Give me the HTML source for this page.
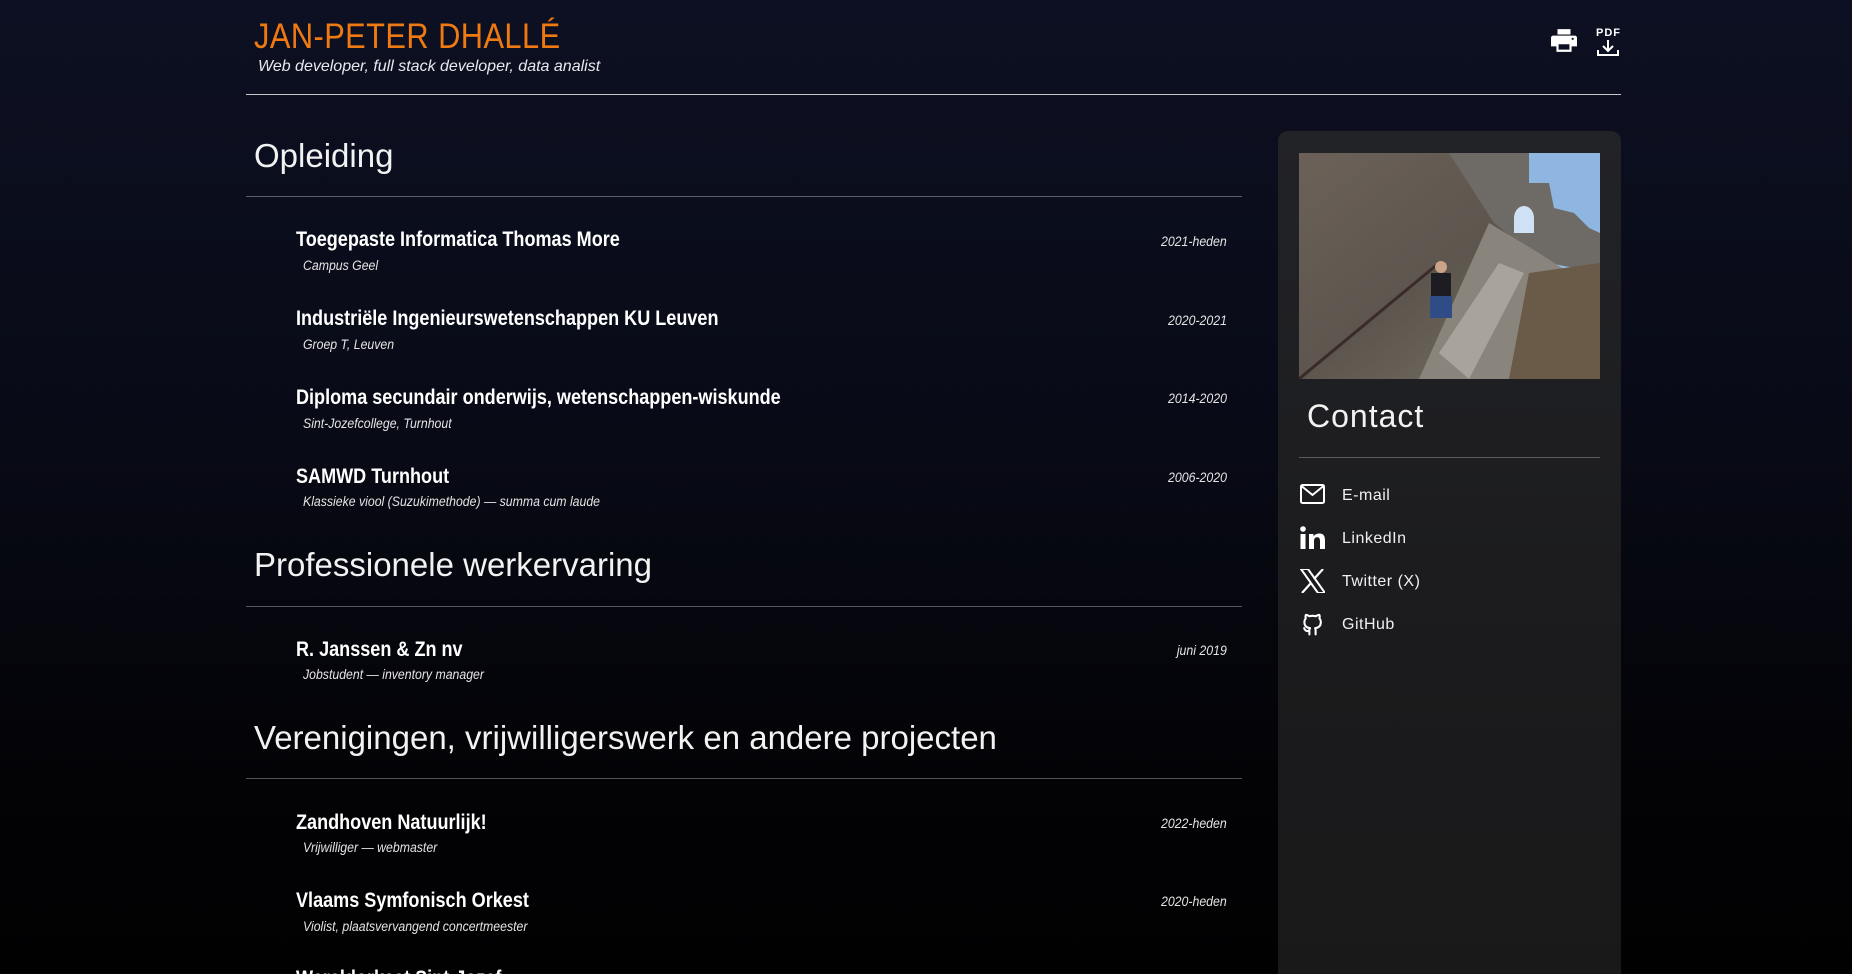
<!DOCTYPE html>
<html><head><meta charset="utf-8"><style>
*{margin:0;padding:0;box-sizing:border-box}
html,body{width:1852px;height:974px;overflow:hidden}
body{background:linear-gradient(180deg,#0d1022 0%,#080a16 45%,#030306 80%,#010102 100%);color:#fff;font-family:"Liberation Sans",sans-serif;position:relative}
.a{position:absolute;white-space:nowrap}
.name{left:254px;top:17px;font-size:35px;color:#f07a12;letter-spacing:0.5px;transform:scaleX(0.88);transform-origin:left}
.sub{left:258px;top:58px;font-size:16px;font-style:italic;color:#e8e8ee}
.hl{position:absolute;height:1px;background:#c8c8cc}
.h2{font-size:33px;color:#f2f2f2;left:254px}
.t{left:296px;font-weight:bold;font-size:21px;color:#fff;transform:scaleX(0.86);transform-origin:left}
.s{left:303px;font-style:italic;font-size:13.5px;color:#e4e4e4;transform:scaleX(0.91);transform-origin:left}
.d{right:625px;font-style:italic;font-size:14px;color:#e4e4e4;transform:scaleX(0.88);transform-origin:right}
.side{position:absolute;left:1278px;top:131px;width:343px;height:860px;border-radius:10px;background:linear-gradient(180deg,#222327 0%,#1b1b1d 60%,#19191a 100%)}
.c{left:1342px;font-size:16px;color:#f0f0f0;letter-spacing:0.5px}
</style></head><body>
<div class="a name">JAN-PETER DHALLÉ</div>
<div class="a sub">Web developer, full stack developer, data analist</div>
<svg class="a" style="left:1551px;top:29px" width="26" height="24" viewBox="0 0 24 22"><path fill="#fff" d="M6 0h12v5H6z M2 6h20a2 2 0 0 1 2 2v8h-5v5H5v-5H0V8a2 2 0 0 1 2-2z M7 14v5h10v-5z"/><circle cx="20" cy="9" r="1" fill="#111"/></svg>
<div class="a" style="left:1596px;top:27px;font-size:11px;font-weight:bold;color:#fff;letter-spacing:1px">PDF</div>
<svg class="a" style="left:1597px;top:40px" width="22" height="16" viewBox="0 0 22 16"><path d="M11 0v10M6 6l5 5 5-5M1 10v5h20v-5" stroke="#fff" stroke-width="2" fill="none"/></svg>
<div class="hl" style="left:246px;top:94px;width:1375px"></div>

<div class="a h2" style="top:137px">Opleiding</div>
<div class="hl" style="left:246px;top:196px;width:996px;background:#5a5c66"></div>
<div class="a t" style="top:228px">Toegepaste Informatica Thomas More</div>
<div class="a s" style="top:258px">Campus Geel</div>
<div class="a d" style="top:233px">2021-heden</div>
<div class="a t" style="top:307px">Industriële Ingenieurswetenschappen KU Leuven</div>
<div class="a s" style="top:337px">Groep T, Leuven</div>
<div class="a d" style="top:312px">2020-2021</div>
<div class="a t" style="top:386px">Diploma secundair onderwijs, wetenschappen-wiskunde</div>
<div class="a s" style="top:416px">Sint-Jozefcollege, Turnhout</div>
<div class="a d" style="top:390px">2014-2020</div>
<div class="a t" style="top:465px">SAMWD Turnhout</div>
<div class="a s" style="top:494px">Klassieke viool (Suzukimethode) — summa cum laude</div>
<div class="a d" style="top:469px">2006-2020</div>

<div class="a h2" style="top:546px">Professionele werkervaring</div>
<div class="hl" style="left:246px;top:606px;width:996px;background:#55565e"></div>
<div class="a t" style="top:638px">R. Janssen &amp; Zn nv</div>
<div class="a s" style="top:667px">Jobstudent — inventory manager</div>
<div class="a d" style="top:642px">juni 2019</div>

<div class="a h2" style="top:719px">Verenigingen, vrijwilligerswerk en andere projecten</div>
<div class="hl" style="left:246px;top:778px;width:996px;background:#505058"></div>
<div class="a t" style="top:811px">Zandhoven Natuurlijk!</div>
<div class="a s" style="top:840px">Vrijwilliger — webmaster</div>
<div class="a d" style="top:815px">2022-heden</div>
<div class="a t" style="top:889px">Vlaams Symfonisch Orkest</div>
<div class="a s" style="top:919px">Violist, plaatsvervangend concertmeester</div>
<div class="a d" style="top:893px">2020-heden</div>
<div class="a t" style="top:967px">Wereldorkest Sint-Jozef</div>

<div class="side"></div>
<svg class="a" style="left:1299px;top:153px" width="301" height="226" viewBox="0 0 301 226">
<defs><linearGradient id="r" x1="0" y1="0" x2="1" y2="1"><stop offset="0" stop-color="#6b6158"/><stop offset="0.5" stop-color="#5d564e"/><stop offset="1" stop-color="#7a7468"/></linearGradient></defs>
<rect width="301" height="226" fill="url(#r)"/>
<path d="M190 0H301V150L260 130 240 100 210 60z" fill="#8fb6e0"/>
<path d="M150 0H230V30L250 30 255 55 275 60 290 75 301 80V120L250 110 220 90 195 70z" fill="#6e6a66"/>
<path d="M215 65a10 12 0 0 1 20 0v15h-20z" fill="#cfe2f5"/>
<path d="M120 226L190 70 240 100 301 140V226z" fill="#8a857c"/>
<path d="M230 120L301 110V226H210z" fill="#6a5a48"/>
<path d="M140 200L200 110 225 120 170 226z" fill="#a8a49c"/>
<path d="M0 226L140 110" stroke="#3a2a28" stroke-width="3"/>
<rect x="132" y="120" width="20" height="25" fill="#1c1c22"/>
<rect x="131" y="143" width="22" height="22" fill="#2f4c86"/>
<circle cx="142" cy="114" r="6" fill="#c9a48a"/>
</svg>
<div class="a" style="left:1307px;top:398px;font-size:32px;color:#f2f2f2;letter-spacing:1px">Contact</div>
<div class="hl" style="left:1299px;top:457px;width:301px;background:#5a5b60"></div>
<svg class="a" style="left:1300px;top:484px" width="25" height="20" viewBox="0 0 25 20"><rect x="1" y="1" width="23" height="18" rx="1.5" stroke="#fff" stroke-width="2" fill="none"/><path d="M1.5 2l11 9 11-9" stroke="#fff" stroke-width="2" fill="none"/></svg>
<div class="a c" style="top:487px">E-mail</div>
<svg class="a" style="left:1300px;top:526px" width="25" height="23" viewBox="0 0 25 23"><circle cx="3" cy="3" r="2.8" fill="#fff"/><rect x="0.5" y="8" width="5" height="15" fill="#fff"/><path d="M9 8h4.5v2.5c1.5-2.5 4-3 6-3 4 0 5.5 2.5 5.5 7V23h-5v-8c0-2.5-.8-3.8-2.8-3.8S14 12.5 14 15v8H9z" fill="#fff"/></svg>
<div class="a c" style="top:530px">LinkedIn</div>
<svg class="a" style="left:1300px;top:569px" width="25" height="24" viewBox="0 0 25 24"><path d="M1 0h7l17 24h-7z" fill="none" stroke="#fff" stroke-width="2"/><path d="M23 0L14 10M2 24l9-10" stroke="#fff" stroke-width="2.2"/></svg>
<div class="a c" style="top:573px">Twitter (X)</div>
<svg class="a" style="left:1300px;top:611px" width="25" height="26" viewBox="0 0 24 24"><path d="M9 22v-3.5c-3.5 1-4.5-1-5-2.5M15 22v-3.5c0-1 .1-1.8-.5-2.5 2.8-.3 5.5-1.4 5.5-6 0-1.3-.5-2.4-1.3-3.3.2-.6.5-2-.1-3.4 0 0-1.1-.3-3.4 1.3a11.5 11.5 0 0 0-6.2 0C6.7 3 5.6 3.3 5.6 3.3c-.6 1.4-.3 2.8-.1 3.4C4.7 7.6 4.2 8.7 4.2 10c0 4.6 2.7 5.7 5.5 6-.4.4-.6 1-.7 1.6" stroke="#fff" stroke-width="2" fill="none" stroke-linecap="round" stroke-linejoin="round"/></svg>
<div class="a c" style="top:616px">GitHub</div>
</body></html>
